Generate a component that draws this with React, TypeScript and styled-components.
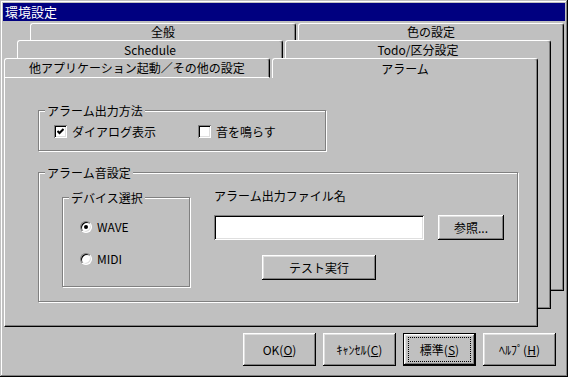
import React from 'react';
import styled, { createGlobalStyle } from 'styled-components';

const GlobalStyle = createGlobalStyle`
  html, body {
    margin: 0;
    padding: 0;
    background: #c0c0c0;
  }
  body {
    font-family: "Noto Sans CJK JP", "Noto Sans", sans-serif;
    font-size: 12px;
    color: #000;
  }
  * {
    box-sizing: border-box;
  }
`;

const Window = styled.div`
  width: 568px;
  height: 377px;
  padding: 3px;
  background: #c0c0c0;
  display: flex;
  flex-direction: column;
  box-shadow: inset -1px -1px #000, inset 1px 1px #c0c0c0, inset -2px -2px #808080, inset 2px 2px #fff;
`;

const TitleBar = styled.div`
  height: 18px;
  padding-left: 2px;
  background: #000080;
  color: #fff;
  display: flex;
  align-items: center;
  font-size: 13px;
  line-height: 18px;
`;

/* 3 rows of tabs, each row with its own sheet, stacked like cards */
const TabArea = styled.div`
  margin: 2px 0 0 1px;
  display: grid;
  grid-template-columns: 13px 13px 508px 13px 13px;
  grid-template-rows: 17px 18px 233px 18px 18px;
`;

const Layer = styled.div<{ $col: string; $row: string }>`
  grid-column: ${p => p.$col};
  grid-row: ${p => p.$row};
  display: flex;
  flex-direction: column;
  min-height: 0;
`;

const TabRow = styled.div<{ $h: number }>`
  height: ${p => p.$h}px;
  display: flex;
  gap: 2px;
  flex: none;
`;

const Tab = styled.div<{ $active?: boolean; $front?: boolean }>`
  flex: 1;
  background: #c0c0c0;
  border-top: 1px solid #fff;
  border-left: 1px solid #fff;
  border-right: 1px solid #000;
  border-bottom: ${p => (p.$front && !p.$active ? '1px solid #fff' : 'none')};
  border-radius: 3px 3px 0 0;
  box-shadow: inset -1px 0 #808080;
  display: flex;
  align-items: center;
  justify-content: center;
  font-size: 12px;
  line-height: 14px;
  white-space: nowrap;
`;

const Sheet = styled.div`
  flex: 1;
  background: #c0c0c0;
  border-left: 1px solid #fff;
  border-right: 1px solid #000;
  border-bottom: 1px solid #000;
  box-shadow: inset -1px -1px #808080;
  display: flex;
  flex-direction: column;
  align-items: flex-start;
`;

const FrontSheet = styled(Sheet)`
  padding: 32px 0 0 33px;
`;

const Group = styled.div<{ $w: number; $h: number }>`
  width: ${p => p.$w}px;
  height: ${p => p.$h}px;
  flex: none;
  border: 1px solid #808080;
  box-shadow: 1px 1px 0 #fff, inset 1px 1px 0 #fff;
  display: flex;
  flex-direction: column;
  align-items: flex-start;
`;

const Legend = styled.span`
  margin: -7px 0 0 6px;
  padding: 0 2px;
  line-height: 14px;
  background: #c0c0c0;
  font-size: 12px;
  white-space: nowrap;
`;

const CheckRow = styled.div`
  display: flex;
  margin: 7px 0 0 15px;
`;

const CheckItem = styled.label<{ $w?: number }>`
  display: flex;
  align-items: center;
  gap: 5px;
  width: ${p => (p.$w ? `${p.$w}px` : 'auto')};
  line-height: 13px;
`;

const CheckBox = styled.span`
  width: 13px;
  height: 13px;
  flex: none;
  background: #fff;
  display: flex;
  align-items: center;
  justify-content: center;
  box-shadow: inset 1px 1px #808080, inset -1px -1px #fff, inset 2px 2px #000, inset -2px -2px #dfdfdf;
`;

const SoundBody = styled.div`
  display: flex;
  align-items: flex-start;
  margin-left: 23px;
`;

const DeviceGroup = styled(Group)`
  margin-top: 17px;
`;

const RadioList = styled.div`
  display: flex;
  flex-direction: column;
  gap: 20px;
  margin: 16px 0 0 17px;
`;

const RadioItem = styled.label`
  display: flex;
  align-items: center;
  gap: 5px;
  height: 12px;
  line-height: 12px;
`;

const Radio = styled.span`
  width: 12px;
  height: 12px;
  flex: none;
  border-radius: 50%;
  background: #fff;
  border: 1px solid;
  border-color: #808080 #fff #fff #808080;
  box-shadow: inset 1px 1px #000, inset -1px -1px #dfdfdf;
  display: flex;
  align-items: center;
  justify-content: center;
`;

const Dot = styled.span`
  width: 4px;
  height: 4px;
  border-radius: 50%;
  background: #000;
`;

const FileColumn = styled.div`
  margin: 9px 0 0 24px;
  display: flex;
  flex-direction: column;
`;

const FieldLabel = styled.div`
  line-height: 14px;
`;

const FileRow = styled.div`
  margin-top: 12px;
  display: flex;
  gap: 14px;
`;

const TextBox = styled.input`
  width: 210px;
  height: 25px;
  border: none;
  padding: 0 4px;
  background: #fff;
  font-family: inherit;
  font-size: 12px;
  outline: none;
  box-shadow: inset 1px 1px #808080, inset -1px -1px #fff, inset 2px 2px #000, inset -2px -2px #dfdfdf;
`;

const TestRow = styled.div`
  width: 210px;
  margin-top: 15px;
  display: flex;
  justify-content: center;
`;

const Button = styled.button<{ $w: number; $h: number; $default?: boolean }>`
  width: ${p => p.$w}px;
  height: ${p => p.$h}px;
  flex: none;
  border: none;
  padding: ${p => (p.$default ? '4px 5px' : '0')};
  background: #c0c0c0;
  color: #000;
  font-family: inherit;
  font-size: 12px;
  line-height: 14px;
  display: flex;
  align-items: stretch;
  box-shadow: ${p =>
    p.$default
      ? 'inset 0 0 0 1px #000, inset -2px -2px #000, inset 2px 2px #fff, inset -3px -3px #808080, inset 3px 3px #dfdfdf'
      : 'inset -1px -1px #000, inset 1px 1px #fff, inset -2px -2px #808080, inset 2px 2px #dfdfdf'};
`;

const ButtonLabel = styled.span<{ $focus?: boolean }>`
  flex: 1;
  display: flex;
  align-items: center;
  justify-content: center;
  white-space: nowrap;
  border: ${p => (p.$focus ? '1px dotted #000' : 'none')};

  u {
    text-underline-offset: 1px;
  }
`;

const ButtonBar = styled.div`
  margin: 6px 9px 0 0;
  display: flex;
  justify-content: flex-end;
  gap: 7px;
`;

const CheckMark = () => (
  <svg width="7" height="7" viewBox="0 0 7 7">
    <path d="M0.5 3 L2.5 5 L6.5 1" fill="none" stroke="#000" strokeWidth="2" />
  </svg>
);

const App: React.FC = () => {
  return (
    <>
      <GlobalStyle />
      <Window>
        <TitleBar>環境設定</TitleBar>
        <TabArea>
          <Layer $col="3 / 6" $row="1 / 4">
            <TabRow $h={17}>
              <Tab>全般</Tab>
              <Tab>色の設定</Tab>
            </TabRow>
            <Sheet />
          </Layer>
          <Layer $col="2 / 5" $row="2 / 5">
            <TabRow $h={18}>
              <Tab>Schedule</Tab>
              <Tab>Todo/区分設定</Tab>
            </TabRow>
            <Sheet />
          </Layer>
          <Layer $col="1 / 4" $row="3 / 6">
            <TabRow $h={20}>
              <Tab $front>他アプリケーション起動／その他の設定</Tab>
              <Tab $front $active>アラーム</Tab>
            </TabRow>
            <FrontSheet>
              <Group $w={288} $h={41}>
                <Legend>アラーム出力方法</Legend>
                <CheckRow>
                  <CheckItem $w={144}>
                    <CheckBox>
                      <CheckMark />
                    </CheckBox>
                    ダイアログ表示
                  </CheckItem>
                  <CheckItem>
                    <CheckBox />
                    音を鳴らす
                  </CheckItem>
                </CheckRow>
              </Group>
              <Group $w={480} $h={130} style={{ marginTop: 21 }}>
                <Legend>アラーム音設定</Legend>
                <SoundBody>
                  <DeviceGroup $w={128} $h={90}>
                    <Legend>デバイス選択</Legend>
                    <RadioList>
                      <RadioItem>
                        <Radio>
                          <Dot />
                        </Radio>
                        WAVE
                      </RadioItem>
                      <RadioItem>
                        <Radio />
                        MIDI
                      </RadioItem>
                    </RadioList>
                  </DeviceGroup>
                  <FileColumn>
                    <FieldLabel>アラーム出力ファイル名</FieldLabel>
                    <FileRow>
                      <TextBox readOnly value="" />
                      <Button $w={66} $h={25}>
                        <ButtonLabel>参照...</ButtonLabel>
                      </Button>
                    </FileRow>
                    <TestRow>
                      <Button $w={114} $h={25}>
                        <ButtonLabel>テスト実行</ButtonLabel>
                      </Button>
                    </TestRow>
                  </FileColumn>
                </SoundBody>
              </Group>
            </FrontSheet>
          </Layer>
        </TabArea>
        <ButtonBar>
          <Button $w={73} $h={33}>
            <ButtonLabel>
              OK(<u>O</u>)
            </ButtonLabel>
          </Button>
          <Button $w={73} $h={33}>
            <ButtonLabel>
              ｷｬﾝｾﾙ(<u>C</u>)
            </ButtonLabel>
          </Button>
          <Button $w={73} $h={33} $default>
            <ButtonLabel $focus>
              標準(<u>S</u>)
            </ButtonLabel>
          </Button>
          <Button $w={73} $h={33}>
            <ButtonLabel>
              ﾍﾙﾌﾟ(<u>H</u>)
            </ButtonLabel>
          </Button>
        </ButtonBar>
      </Window>
    </>
  );
};

export default App;
